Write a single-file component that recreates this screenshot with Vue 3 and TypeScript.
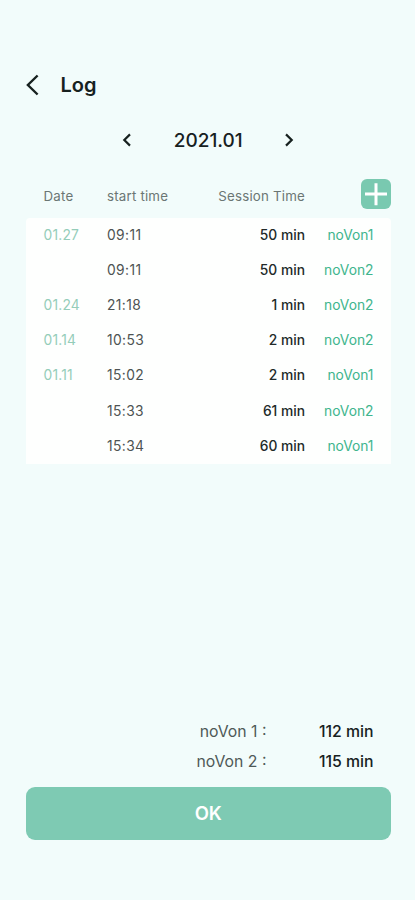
<script setup lang="ts">
interface Session {
  date?: string
  start: string
  minutes: number
  device: string
}

const month = '2021.01'

const sessions: Session[] = [
  { date: '01.27', start: '09:11', minutes: 50, device: 'noVon1' },
  { start: '09:11', minutes: 50, device: 'noVon2' },
  { date: '01.24', start: '21:18', minutes: 1, device: 'noVon2' },
  { date: '01.14', start: '10:53', minutes: 2, device: 'noVon2' },
  { date: '01.11', start: '15:02', minutes: 2, device: 'noVon1' },
  { start: '15:33', minutes: 61, device: 'noVon2' },
  { start: '15:34', minutes: 60, device: 'noVon1' },
]

const totals = [
  { label: 'noVon 1 :', minutes: 112 },
  { label: 'noVon 2 :', minutes: 115 },
]
</script>

<template>
  <main class="screen">
    <header class="topbar">
      <button class="plain" aria-label="Back">
        <svg width="14" height="22" viewBox="0 0 14 22">
          <path d="M11.6 1.5 1.9 11l9.7 9.5" stroke-width="2.4" />
        </svg>
      </button>
      <h1>Log</h1>
    </header>

    <nav class="month">
      <button class="plain" aria-label="Previous month">
        <svg width="10" height="14" viewBox="0 0 10 14">
          <path d="M8 1.4 2.3 7 8 12.6" stroke-width="2.2" />
        </svg>
      </button>
      <span class="month-name">{{ month }}</span>
      <button class="plain" aria-label="Next month">
        <svg width="10" height="14" viewBox="0 0 10 14">
          <path d="M2 1.4 7.7 7 2 12.6" stroke-width="2.2" />
        </svg>
      </button>
    </nav>

    <section class="log">
      <div class="row head">
        <span>Date</span>
        <span>start time</span>
        <span class="right">Session Time</span>
        <button class="plain add" aria-label="Add session">
          <svg width="30" height="30" viewBox="0 0 30 30">
            <path d="M15 4.2v22M4 15h22" stroke-width="3" />
          </svg>
        </button>
      </div>
      <div class="rows">
        <div v-for="(s, i) in sessions" :key="i" class="row">
          <span class="date">{{ s.date }}</span>
          <span class="start">{{ s.start }}</span>
          <span class="right duration">{{ s.minutes }} min</span>
          <span class="right device">{{ s.device }}</span>
        </div>
      </div>
    </section>

    <section class="totals">
      <div v-for="t in totals" :key="t.label" class="total">
        <span class="right total-label">{{ t.label }}</span>
        <span class="right total-value">{{ t.minutes }} min</span>
      </div>
    </section>

    <button class="ok">OK</button>
  </main>
</template>

<style>
body {
  background: #f2fcfb;
}
</style>

<style scoped>
.screen {
  box-sizing: border-box;
  display: flex;
  flex-direction: column;
  height: 900px;
  padding: 70px 24.5px 60px 26px;
  background: #f2fcfb;
  color: #17211f;
  font-family: Inter, "Liberation Sans", sans-serif;
}

.plain {
  display: flex;
  align-items: center;
  justify-content: center;
  padding: 0;
  border: 0;
  background: none;
  color: inherit;
}

svg {
  display: block;
  fill: none;
  stroke: currentColor;
}

.topbar {
  display: flex;
  align-items: center;
  gap: 20.5px;
  height: 30px;
}

h1 {
  margin: 0;
  font-size: 20px;
  font-weight: 600;
  line-height: 30px;
}

.month {
  display: flex;
  align-items: center;
  justify-content: center;
  gap: 41.5px;
  height: 30px;
  margin-top: 25px;
}

.month-name {
  font-size: 19px;
  font-weight: 500;
}

.log {
  margin-top: 23px;
}

.row {
  box-sizing: border-box;
  display: grid;
  grid-template-columns: 63.5px 90px 108px 68.5px;
  align-items: center;
  height: 35.2px;
  padding: 0 0 1px 17.5px;
  font-size: 13.8px;
}

.head {
  height: 39.5px;
  padding-bottom: 4px;
  color: #6b7674;
  font-size: 13.3px;
  letter-spacing: 0.2px;
}

.right {
  text-align: right;
}

.add {
  align-self: start;
  justify-self: end;
  width: 30px;
  height: 30px;
  margin: 1px -17px 0 0;
  border-radius: 6px;
  background: #79c9b0;
  color: #fff;
}

.rows {
  border-radius: 4px 4px 0 0;
  background: #fefffe;
}

.date {
  color: #94cdb9;
  letter-spacing: 0.2px;
}

.start {
  color: #4d5352;
  letter-spacing: 0.4px;
}

.duration {
  color: #222a29;
  font-weight: 500;
}

.device {
  color: #40b58d;
}

.totals {
  margin-top: auto;
  padding-right: 17px;
}

.total {
  display: grid;
  grid-template-columns: 1fr 107px;
  align-items: center;
  height: 30px;
  font-size: 15.8px;
}

.total-label {
  color: #4e5957;
}

.total-value {
  font-weight: 500;
}

.ok {
  flex: none;
  height: 53.5px;
  margin-top: 10.5px;
  padding: 0;
  border: 0;
  border-radius: 9px;
  background: #7ecab3;
  color: #fff;
  font-family: inherit;
  font-size: 18.5px;
  font-weight: 600;
}
</style>
